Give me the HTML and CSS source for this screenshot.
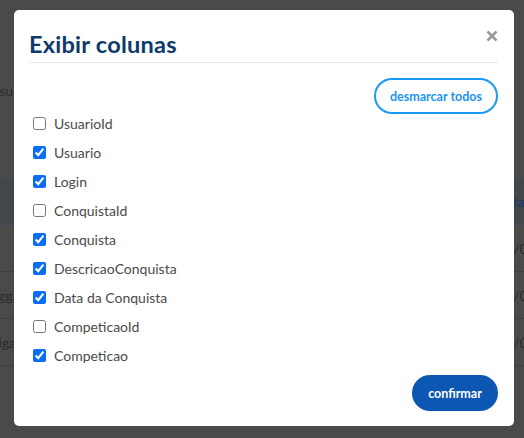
FILE: index.html
```html
<!DOCTYPE html>
<html lang="pt">
<head>
<meta charset="utf-8">
<title>Exibir colunas</title>
<link rel="stylesheet" href="styles.css">
</head>
<body>
<div class="page">
  <div class="search-row"><span class="cut">Pesquisar usu</span></div>
  <div class="table">
    <div class="trow thead"><div class="c1"></div><div class="c2"><span class="hd">Data</span></div></div>
    <div class="trow"><div class="c1"><span class="cut"></span></div><div class="c2">10/05/2023</div></div>
    <div class="trow"><div class="c1"><span class="cut">Diego Maggi</span></div><div class="c2">10/05/2023</div></div>
    <div class="trow"><div class="c1"><span class="cut">Liga</span></div><div class="c2">10/05/2023</div></div>
  </div>
</div>

<div class="modal">
  <div class="modal-header">
    <h1 class="modal-title">Exibir colunas</h1>
    <button class="close" aria-label="Fechar">
      <svg width="12" height="12" viewBox="0 0 12 12"><path d="M1.5 1.5 L10.5 10.5 M10.5 1.5 L1.5 10.5" stroke="#9a9a9a" stroke-width="2.6" stroke-linecap="butt"/></svg>
    </button>
  </div>
  <div class="toolbar"><button class="btn-outline">desmarcar todos</button></div>
  <ul class="cols">
    <li><label><input type="checkbox"><span>UsuarioId</span></label></li>
    <li><label><input type="checkbox" checked><span>Usuario</span></label></li>
    <li><label><input type="checkbox" checked><span>Login</span></label></li>
    <li><label><input type="checkbox"><span>ConquistaId</span></label></li>
    <li><label><input type="checkbox" checked><span>Conquista</span></label></li>
    <li><label><input type="checkbox" checked><span>DescricaoConquista</span></label></li>
    <li><label><input type="checkbox" checked><span>Data da Conquista</span></label></li>
    <li><label><input type="checkbox"><span>CompeticaoId</span></label></li>
    <li><label><input type="checkbox" checked><span>Competicao</span></label></li>
  </ul>
  <div class="footer"><button class="btn-primary">confirmar</button></div>
</div>
</body>
</html>
```
FILE: styles.css
```css
html, body {
  margin: 0;
  padding: 0;
}
body {
  width: 524px;
  height: 438px;
  overflow: hidden;
  background: #4a4a4a;
  font-family: "Lato", "Noto Sans", sans-serif;
  position: relative;
}
.page {
  display: flex;
  flex-direction: column;
  color: #2b2b2b;
  font-size: 14px;
}
.search-row {
  height: 20px;
  margin-top: 80px;
  width: 13px;
  display: flex;
  justify-content: flex-end;
  align-items: center;
  white-space: nowrap;
  color: #2a2a2a;
}
.table {
  margin-top: 78px;
  display: flex;
  flex-direction: column;
}
.trow {
  display: flex;
  justify-content: space-between;
  height: 46px;
  border-bottom: 1px solid #3f3f3f;
  align-items: center;
}
.thead {
  background: #43474c;
  border-bottom: 1px solid #3f4d5c;
}
.c1 {
  width: 16px;
  display: flex;
  justify-content: flex-end;
  white-space: nowrap;
  color: #2a2a2a;
}
.c2 {
  width: 27px;
  white-space: nowrap;
  color: #2a2a2a;
}
.hd {
  display: inline-block;
  margin-left: -2px;
  color: #1b3d63;
  font-weight: 700;
}

.modal {
  position: absolute;
  left: 14px;
  top: 10px;
  width: 500px;
  height: 416px;
  box-sizing: border-box;
  background: #fff;
  border-radius: 5px;
  padding: 0 16px 15px 15px;
  display: flex;
  flex-direction: column;
}
.modal-header {
  height: 52px;
  border-bottom: 1px solid #e7eaed;
  display: flex;
  justify-content: space-between;
  align-items: flex-start;
}
.modal-title {
  margin: 20px 0 0;
  font-size: 23.5px;
  line-height: 28px;
  font-weight: 700;
  letter-spacing: 0.25px;
  color: #0c3a6b;
}
.close {
  margin-top: 20px;
  padding: 0;
  border: 0;
  background: none;
  width: 12px;
  height: 12px;
  display: flex;
}
.toolbar {
  display: flex;
  justify-content: flex-end;
  margin-top: 15px;
}
.btn-outline {
  width: 124px;
  height: 36px;
  border: 2px solid #1a9bfb;
  border-radius: 18px;
  background: #fff;
  color: #1a95f0;
  font-family: inherit;
  font-size: 12.5px;
  font-weight: 700;
  padding: 0;
}
.cols {
  list-style: none;
  margin: -1px 0 0;
  padding: 0 0 0 4px;
  display: flex;
  flex-direction: column;
  gap: 9px;
}
.cols li {
  height: 20px;
}
.cols label {
  display: flex;
  align-items: center;
  height: 20px;
  gap: 8px;
  font-size: 14px;
  color: #4a4a4a;
}
.cols input {
  margin: 0;
  width: 13px;
  height: 13px;
  accent-color: #0b6cf6;
}
.footer {
  margin-top: auto;
  display: flex;
  justify-content: flex-end;
}
.btn-primary {
  width: 86px;
  height: 36px;
  border: 0;
  border-radius: 18px;
  background: #0b57b1;
  color: #fff;
  font-family: inherit;
  font-size: 12.5px;
  font-weight: 700;
  padding: 0;
}
```
